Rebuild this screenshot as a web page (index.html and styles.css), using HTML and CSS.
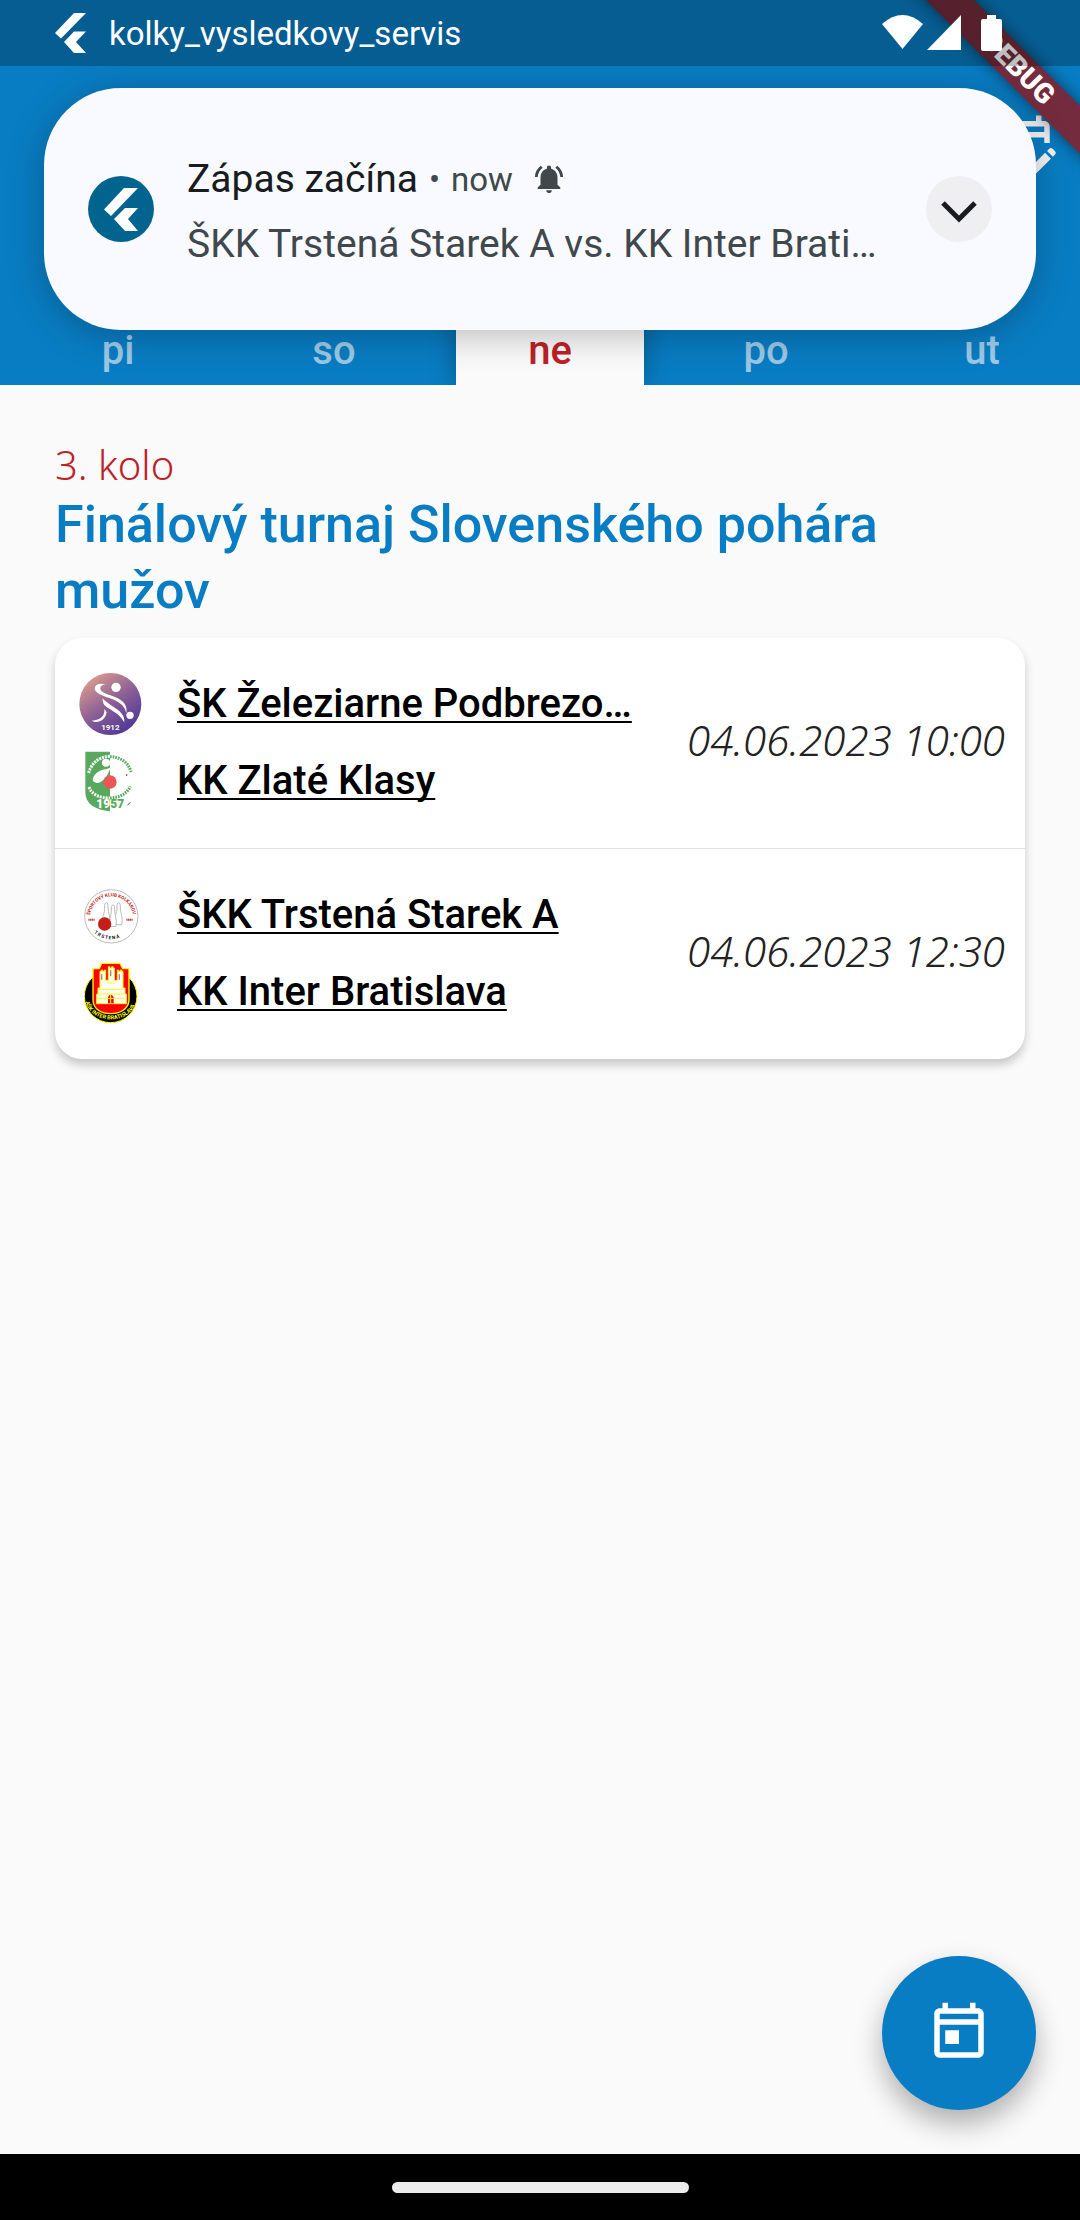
FILE: index.html
```html
<!DOCTYPE html>
<html lang="sk">
<head>
<meta charset="utf-8">
<meta name="viewport" content="width=device-width, initial-scale=1">
<title>Kolky – výsledkový servis</title>
<link rel="stylesheet" href="styles.css">
</head>
<body>
<div class="status-bar">
  <svg class="status-logo" viewBox="0 0 31 40" aria-hidden="true"><path fill="#fff" d="M19 0H31L6 25.500L0 20zM19 18.500H31L21 29L31 40H19L9 29z"/></svg>
  <span class="status-app">kolky_vysledkovy_servis</span>
  <svg class="status-icons" viewBox="0 0 122 38" aria-hidden="true"><g fill="#fff"><path d="M0 10Q20.500 -8 41 10L20.500 35z"/><path d="M45 36L79 1V36z"/><path d="M99 7q0-2 2-2h4V1h9v4h4q2 0 2 2v28q0 2-2 2h-17q-2 0-2-2z"/></g></svg>
</div>

<header class="app-bar">
  <button class="edit-button" aria-label="Upraviť kalendár">
    <svg viewBox="0 0 24 24"><path fill="#f4f4f4" d="M12 22H5a2 2 0 0 1-2-2L3.010 6c0-1.100.880-2 1.990-2h1V2h2v2h8V2h2v2h1c1.100 0 2 .9 2 2v6h-2v-2H5v10h7v2zm10.130-5.010.710-.710a.996.996 0 0 0 0-1.410l-.710-.710a.996.996 0 0 0-1.410 0l-.710.710 2.120 2.120zm-.710.710-5.300 5.300H14v-2.120l5.300-5.300 2.120 2.120zM5 6h14v2H5z" fill-rule="evenodd"/></svg>
  </button>
  <nav class="days">
    <a class="day" href="#pi">pi</a>
    <a class="day" href="#so">so</a>
    <a class="day day-active" href="#ne" aria-current="date">ne</a>
    <a class="day" href="#po">po</a>
    <a class="day" href="#ut">ut</a>
  </nav>
</header>

<main class="content">
  <p class="round">3. kolo</p>
  <h1 class="competition">Finálový turnaj Slovenského pohára mužov</h1>
  <section class="matches">
    <article class="match">
      <div class="teams">
        <div class="team">
          <svg class="crest" viewBox="23 33 198 198" aria-hidden="true">
            <defs><linearGradient id="dusk" x1="0.100" y1="0" x2="0.800" y2="1"><stop offset="0" stop-color="#eaa58b"/><stop offset=".5" stop-color="#8e6295"/><stop offset="1" stop-color="#4b3297"/></linearGradient></defs>
            <circle cx="120" cy="132" r="93" fill="url(#dusk)"/>
            <g fill="#fff"><circle cx="137" cy="82" r="14"/><circle cx="179" cy="166" r="11"/>
            <path d="M106 73C84 66 66 78 76 93C86 108 126 114 143 126C159 136 165 146 168 160C172 134 158 122 136 112C116 104 90 97 90 87C89 78 96 75 106 73z"/>
            <path d="M96 115C98 130 100 136 112 143C134 156 150 166 162 187C164 166 148 152 130 141C116 132 105 124 96 115z"/>
            <path d="M102 147C104 166 92 181 64 182C80 192 106 182 109 156z"/></g>
            <text x="120" y="209" text-anchor="middle" class="crest-year">1912</text>
          </svg>
          <a class="team-name" href="#podbrezova">ŠK Železiarne Podbrezo…</a>
        </div>
        <div class="team">
          <svg class="crest" viewBox="23 265 198 198" aria-hidden="true">
            <path fill="#58a95d" d="M45 276H119V455C72 450 45 432 45 397z"/>
            <path d="M55 340C62 313 84 291 119 290" fill="none" stroke="#fff" stroke-width="9" stroke-dasharray="6 3"/>
            <path d="M119 291C146 291 174 306 182 337" fill="none" stroke="#58a95d" stroke-width="9" stroke-dasharray="5 3"/>
            <path d="M56 382C64 405 88 415 119 415" fill="none" stroke="#fff" stroke-width="9" stroke-dasharray="6 3"/>
            <path d="M119 415C146 414 170 403 180 380" fill="none" stroke="#58a95d" stroke-width="9" stroke-dasharray="5 3"/>
            <path d="M68 355C74 341 88 331 107 329L119 324V345C104 354 88 377 74 368Q65 365 68 355z" fill="#fff"/>
            <circle cx="107" cy="309" r="12" fill="#fff"/><path d="M119 329L108 352H119z" fill="#58a95d"/>
            <circle cx="119" cy="367" r="20" fill="#ea5656"/>
            <text x="78" y="444" class="crest-founded"><tspan fill="#fff">19</tspan><tspan fill="#58a95d">57</tspan></text>
            <path d="M171 437L180 428" stroke="#555" stroke-width="3"/><circle cx="169" cy="346" r="2"/>
          </svg>
          <a class="team-name" href="#klasy">KK Zlaté Klasy</a>
        </div>
      </div>
      <time class="kickoff" datetime="2023-06-04T10:00">04.06.2023 10:00</time>
    </article>
    <article class="match">
      <div class="teams">
        <div class="team">
          <svg class="crest" viewBox="23 8 198 198" aria-hidden="true">
            <circle cx="123" cy="111" r="80" fill="#fff" stroke="#999" stroke-width="2"/>
            <path id="trstenaTop" fill="none" d="M59 108A65 65 0 0 1 188 108"/>
            <path id="trstenaBottom" fill="none" d="M71 161Q123 200 176 158"/>
            <text class="arc-text arc-red"><textPath href="#trstenaTop">ŠPORTOVÝ KLUB KOLKÁROV</textPath></text>
            <text class="arc-text arc-black"><textPath href="#trstenaBottom">T R S T E N Á</textPath></text>
            <g fill="#fff" stroke="#bbb" stroke-width="3"><path d="M108 70q6 0 5 16c0 14 10 30 5 52h-20c-6-22 6-38 5-52q-1-16 5-16z"/><path d="M145 70q6 0 5 16c0 14 9 30 4 50h-20c-5-20 7-36 6-50q-1-16 5-16z"/><path d="M128 77q6 0 5 16c0 14 8 28 4 48h-18c-5-20 5-34 4-48q-1-16 5-16z"/></g>
            <circle cx="103" cy="134" r="20" fill="#c51d18"/>
            <path d="M54 121h20M168 121h20" stroke="#c64a48" stroke-width="6" stroke-dasharray="4 1"/>
          </svg>
          <a class="team-name" href="#trstena">ŠKK Trstená Starek A</a>
        </div>
        <div class="team">
          <svg class="crest" viewBox="23 238 198 198" aria-hidden="true">
            <circle cx="121" cy="350" r="79" fill="#000" stroke="#ff0" stroke-width="3"/>
            <path d="M68 267H87L94 251H149L157 267H176V362C174 388 150 402 121 402C92 402 69 388 68 362z" fill="#f00" stroke="#ff0" stroke-width="4"/>
            <path d="M114 261h4v4h6v-4h4v4h4v37h9v-31h4v4h5v-4h4v4h4v50h6v18h4v29H79v-29h4v-18h6v-50h4v-4h4v4h5v-4h4v31h8z" fill="#fff" stroke="#ff0" stroke-width="3"/>
            <path d="M83 343H160M79 356H163M86 329H156M111 310H133" stroke="#ff0" stroke-width="3"/>
            <path d="M113 371V352Q121 338 130 352V371z" fill="#f00"/>
            <path d="M121 343V371M111 356H131" stroke="#ff0" stroke-width="3"/>
            <path d="M94 284v16M147 284v16M121 272v18" stroke="#b78" stroke-width="4"/>
            <path id="interBottom" fill="none" d="M46 366A76 60 0 0 0 197 366"/>
            <text class="arc-text arc-yellow"><textPath href="#interBottom">AŠK INTER BRATISLAVA</textPath></text>
          </svg>
          <a class="team-name" href="#inter">KK Inter Bratislava</a>
        </div>
      </div>
      <time class="kickoff" datetime="2023-06-04T12:30">04.06.2023 12:30</time>
    </article>
  </section>
  <button class="fab" aria-label="Vybrať dátum">
    <svg viewBox="0 0 24 24"><path fill="#fff" d="M19 3h-1V1h-2v2H8V1H6v2H5c-1.110 0-1.990.9-1.990 2L3 19c0 1.100.890 2 2 2h14c1.100 0 2-.9 2-2V5c0-1.100-.9-2-2-2zm0 16H5V9h14v10zm0-12H5V5h14v2zM7 11h5v5H7z"/></svg>
  </button>
</main>

<div class="system-nav"><span class="home-handle"></span></div>

<div class="debug-corner"><span class="debug-ribbon">DEBUG</span></div>

<aside class="notification">
  <span class="app-icon"><svg viewBox="0 0 34 43" aria-hidden="true"><path fill="#fff" d="M20 0H34L7 28L0 21.500zM21 20H34L24 31L34 43H21L10 31z"/></svg></span>
  <div class="message">
    <div class="message-head">
      <strong class="message-title">Zápas začína</strong>
      <span class="message-time">•</span>
      <span class="message-time">now</span>
      <svg class="bell" viewBox="0 0 24 24" aria-hidden="true"><path fill="#40484c" d="M7.580 4.080L6.150 2.650C3.750 4.480 2.170 7.300 2.030 10.500h2c.150-2.650 1.510-4.970 3.550-6.420zm12.390 6.420h2c-.150-3.200-1.730-6.020-4.120-7.850l-1.420 1.430c2.020 1.450 3.390 3.770 3.540 6.420zM18 11c0-3.070-1.640-5.640-4.500-6.320V4c0-.830-.670-1.500-1.500-1.500s-1.500.670-1.500 1.500v.680C7.630 5.360 6 7.920 6 11v5l-2 2v1h16v-1l-2-2v-5zm-6 11c.140 0 .270-.010.400-.040.650-.140 1.180-.580 1.440-1.180.100-.240.150-.500.150-.780h-4c.010 1.100.900 2 2.010 2z"/></svg>
    </div>
    <p class="message-body">ŠKK Trstená Starek A vs. KK Inter Brati…</p>
  </div>
  <button class="expand" aria-label="Rozbaliť"><svg viewBox="0 0 66 66"><path d="M17 27L33 43L49 27" fill="none" stroke="#191c1e" stroke-width="5"/></svg></button>
</aside>
</body>
</html>
```
FILE: styles.css
```css
* { box-sizing: border-box; }

body {
  margin: 0;
  min-height: 100vh;
  display: flex;
  flex-direction: column;
  position: relative;
  overflow-x: hidden;
  background: #fafafa;
  color: #000;
  font-family: Roboto, sans-serif;
  font-size: 40px;
}

p, h1 { margin: 0; }
button { border: 0; padding: 0; }
svg { display: block; }

/* System status bar: translucent, above the app and the debug ribbon */
.status-bar {
  height: 66px;
  padding: 0 76px 0 55px;
  display: flex;
  align-items: center;
  gap: 23px;
  position: relative;
  z-index: 3;
  background: rgba(0, 0, 0, 0.25);
  color: #fff;
  font: 33px/66px Roboto, sans-serif;
}
.status-logo { width: 31px; height: 40px; }
.status-app { flex: 1; padding-top: 2px; }
.status-icons { width: 122px; height: 38px; }

.app-bar {
  margin-top: -66px;
  padding-top: 110px;
  height: 385px;
  display: flex;
  flex-direction: column;
  justify-content: space-between;
  background: #097dc3;
}
.edit-button {
  align-self: flex-end;
  width: 66px;
  height: 66px;
  margin-right: 22px;
  background: none;
}

.days {
  display: flex;
  justify-content: space-between;
  padding: 0 4px 0 24px;
  overflow: hidden;
}
.day {
  width: 188px;
  height: 160px;
  padding-top: 102px;
  text-align: center;
  text-decoration: none;
  color: #9bc8e5;
  font-weight: 500;
  line-height: 48px;
}
.day-active {
  background: #fafafa;
  color: #bd2129;
  box-shadow: 0 0 24px rgba(0, 0, 0, 0.3);
}

.content {
  flex: 1;
  position: relative;
  padding: 54px 55px;
}
.round {
  color: #bd2129;
  font-family: "Noto Sans", sans-serif;
  font-weight: 300;
  line-height: 52px;
}
.competition {
  padding-top: 1px;
  color: #097dc3;
  font-size: 52px;
  font-weight: 500;
  line-height: 66px;
}

.matches {
  margin-top: 14px;
  border-radius: 27px;
  background: #fff;
  box-shadow: 0 6px 10px rgba(0, 0, 0, 0.2);
}
.match {
  padding: 27px 20px 29px 23px;
  display: flex;
  align-items: center;
  justify-content: space-between;
}
.match + .match { border-top: 1px solid #e0e0e0; }
.team {
  height: 77px;
  display: flex;
  align-items: center;
  gap: 33px;
}
.crest { width: 66px; height: 66px; }
.team-name {
  color: #000;
  font-weight: 500;
  line-height: 66px;
  text-decoration: underline;
  text-decoration-thickness: 2px;
  text-underline-offset: 4px;
  text-decoration-skip-ink: none;
}
.kickoff {
  padding-bottom: 4px;
  color: #222;
  font-family: "Noto Sans", sans-serif;
  font-size: 42px;
  font-style: italic;
  font-weight: 300;
  line-height: 60px;
}

.crest-year { font: 700 24px Roboto, sans-serif; fill: #fff; }
.crest-founded { font: 900 36px Roboto, sans-serif; }
.arc-text { font: 700 14px Roboto, sans-serif; }
.arc-red { fill: #c51d18; }
.arc-black { fill: #111; }
.arc-yellow { font-size: 17px; fill: #ff0; }

.fab {
  position: absolute;
  right: 44px;
  bottom: 44px;
  width: 154px;
  height: 154px;
  display: grid;
  place-items: center;
  border-radius: 50%;
  background: #097dc3;
  box-shadow: 0 14px 28px rgba(0, 0, 0, 0.3);
}
.fab svg { width: 66px; height: 66px; }

.system-nav {
  height: 66px;
  display: grid;
  place-items: center;
  position: relative;
  background: #000;
}
.home-handle {
  width: 297px;
  height: 11px;
  border-radius: 6px;
  background: #ececec;
}

/* Flutter debug ribbon across the top right corner */
.debug-corner {
  position: absolute;
  top: 0;
  right: 0;
  width: 200px;
  height: 200px;
  overflow: hidden;
  z-index: 1;
}
.debug-ribbon {
  position: absolute;
  top: 49px;
  right: -86px;
  width: 300px;
  height: 34px;
  padding-left: 6px;
  transform: rotate(45deg);
  background: #742b3d;
  box-shadow: 0 0 16px rgba(0, 0, 0, 0.5);
  color: #fff;
  text-align: center;
  font: 900 28px/34px Roboto, sans-serif;
}

.notification {
  position: absolute;
  top: 88px;
  left: 44px;
  right: 44px;
  min-height: 242px;
  padding: 0 44px;
  display: flex;
  align-items: center;
  gap: 33px;
  z-index: 2;
  border-radius: 77px;
  background: #f8faff;
  box-shadow: 0 6px 36px rgba(0, 0, 0, 0.25);
  color: #40484c;
  font: 39px/64px Roboto, sans-serif;
}
.app-icon {
  width: 66px;
  height: 66px;
  display: grid;
  place-items: center;
  border-radius: 50%;
  background: #00658e;
}
.app-icon svg { width: 34px; height: 43px; }
.message { flex: 1; min-width: 0; padding-top: 4px; }
.message-head { display: flex; align-items: center; gap: 11px; }
.message-title { color: #191c1e; font-weight: 400; }
.message-time { font-size: 33px; padding-top: 2px; }
.bell { width: 34px; height: 34px; margin-left: 8px; }
.message-body { white-space: nowrap; }
.expand {
  width: 66px;
  height: 66px;
  border-radius: 50%;
  background: #efeff1;
}
```
